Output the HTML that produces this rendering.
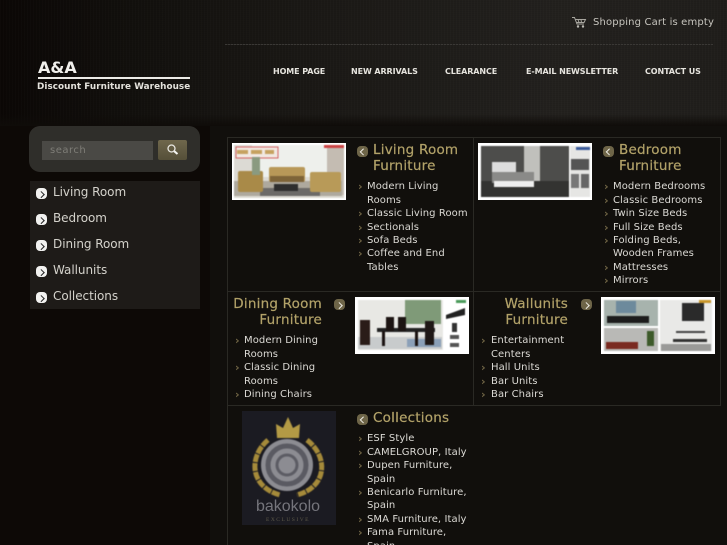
<!DOCTYPE html>
<html><head><meta charset="utf-8"><style>
*{margin:0;padding:0;box-sizing:border-box}
html,body{width:727px;height:545px;overflow:hidden;background:#0d0906}
body{position:relative;font-family:"DejaVu Sans","Liberation Sans",sans-serif;color:#d8d6d0}
.a{position:absolute;white-space:nowrap}
#top{left:0;top:0;width:727px;height:126px;background:linear-gradient(90deg,#0b0705 0,#12100d 130px,#1a1815 300px,#23211e 560px,#201e1b 727px)}
#tex{left:0;top:0;width:727px;height:126px;background:repeating-linear-gradient(90deg,rgba(255,255,255,.012) 0 1px,transparent 1px 3px),repeating-linear-gradient(0deg,rgba(0,0,0,.05) 0 1px,transparent 1px 2px)}
#fade{left:0;top:114px;width:727px;height:12px;background:linear-gradient(180deg,transparent,#0f0c09)}
#right{left:210px;top:126px;width:517px;height:419px;background:#110f0c}
.nav{top:66px;font:bold 8px/11px "DejaVu Sans",sans-serif;color:#e6e4de;letter-spacing:-.1px}
.side{left:53px;font-size:12px;line-height:18px;color:#d4d2cb;letter-spacing:-.05px}
.bul{left:36px;width:11px;height:11px;border-radius:4px;background:#f2f2f0}
.bul:after,.arr:after{content:"";position:absolute;left:2.5px;top:3.5px;width:3.5px;height:3.5px;border-top:1.5px solid #222;border-right:1.5px solid #222;transform:rotate(45deg)}
.h{font-size:13.5px;line-height:16px;color:#b2a269;letter-spacing:.22px;-webkit-text-stroke:.2px #b2a269}
.r{text-align:right}
.l{font-size:10px;line-height:13.4px;color:#dcdad5;letter-spacing:.08px}
.m{font-size:11px;font-weight:bold;line-height:13.4px;color:#716646}
.arr{width:11px;height:11px;border-radius:4px;background:#6e6548}
.arr:after{border-color:#f0eee8}
.arr.b:after{transform:rotate(-135deg);left:4.2px}
.line{background:#2a2924}
.img{background:#fff;overflow:hidden}
.img g,.bk{filter:blur(.6px)}
</style></head><body>
<div class="a" id="top"></div><div class="a" id="tex"></div><div class="a" id="fade"></div>
<div class="a" id="right"></div>

<svg class="a" style="left:571px;top:16px" width="16" height="13" viewBox="0 0 16 13" fill="none" stroke="#a8a69f" stroke-width="1"><path d="M1 1.500h2.500l2.500 6.500h7M4 3.500h10.500l-1.500 3H5.500M7 3.500l1 3M10 3.500l.5 3"/><circle cx="7" cy="10.500" r="1.200" fill="#bdbbb4" stroke="none"/><circle cx="12" cy="10.500" r="1.200" fill="#bdbbb4" stroke="none"/></svg>
<div class="a" style="left:593px;top:16px;font-size:10px;line-height:13px;color:#c6c4bd;letter-spacing:.15px">Shopping Cart is empty</div>
<div class="a" style="left:225px;top:44px;width:488px;height:1px;background:repeating-linear-gradient(90deg,#3a3835 0 2px,#262421 2px 3px)"></div>

<div class="a" style="left:38px;top:58px;font:bold 16px/19px 'DejaVu Sans',sans-serif;color:#f1f0ec">A&amp;A</div>
<div class="a" style="left:38px;top:77px;width:152px;height:2px;background:#ecebe7"></div>
<div class="a" style="left:37px;top:82px;font:bold 8.8px/11px 'DejaVu Sans',sans-serif;color:#e4e2dc;letter-spacing:.07px">Discount Furniture Warehouse</div>

<div class="a nav" style="left:273px">HOME PAGE</div>
<div class="a nav" style="left:351px">NEW ARRIVALS</div>
<div class="a nav" style="left:445px">CLEARANCE</div>
<div class="a nav" style="left:526px">E-MAIL NEWSLETTER</div>
<div class="a nav" style="left:645px">CONTACT US</div>

<div class="a" style="left:29px;top:126px;width:171px;height:46px;border-radius:11px;background:#2f2e2a"></div>
<div class="a" style="left:42px;top:141px;width:111px;height:19px;background:#4a4945;font-size:10px;line-height:19px;color:#7e7d77;padding-left:8px;letter-spacing:.5px">search</div>
<div class="a" style="left:158px;top:140px;width:29px;height:20px;border-radius:2px;background:linear-gradient(180deg,#6f674c,#554f39)"></div>
<svg class="a" style="left:166px;top:143px" width="14" height="14" viewBox="0 0 14 14" fill="none"><circle cx="5.500" cy="5.500" r="3.500" stroke="#e8e6e0" stroke-width="1.300"/><path d="M8.200 8.200l3.300 2.800" stroke="#f4f4f0" stroke-width="2"/></svg>

<div class="a" style="left:30px;top:181px;width:170px;height:128px;background:#1e1b18"></div>
<div class="a bul" style="top:188px"></div><div class="a side" style="top:183px">Living Room</div>
<div class="a bul" style="top:214px"></div><div class="a side" style="top:209px">Bedroom</div>
<div class="a bul" style="top:240px"></div><div class="a side" style="top:235px">Dining Room</div>
<div class="a bul" style="top:266px"></div><div class="a side" style="top:261px">Wallunits</div>
<div class="a bul" style="top:292px"></div><div class="a side" style="top:287px">Collections</div>

<!-- grid -->
<div class="a line" style="left:227px;top:137px;width:494px;height:1px"></div>
<div class="a line" style="left:227px;top:291px;width:494px;height:1px"></div>
<div class="a line" style="left:227px;top:405px;width:494px;height:1px"></div>
<div class="a line" style="left:227px;top:137px;width:1px;height:408px"></div>
<div class="a line" style="left:473px;top:137px;width:1px;height:268px"></div>
<div class="a line" style="left:720px;top:137px;width:1px;height:269px"></div>

<!-- living -->
<svg class="a img" style="left:232px;top:143px" width="114" height="57" viewBox="0 0 114 57"><g><rect x="2" y="2" width="110" height="53" fill="#dcdad4"/><rect x="20" y="2" width="75" height="32" fill="#eef0ec"/><rect x="95" y="2" width="17" height="50" fill="#c4bcb2"/><rect x="4" y="4" width="42" height="11" fill="#f1e8e2" stroke="#c44" stroke-width=".8"/><rect x="5" y="7" width="11" height="4" fill="#c6a260"/><rect x="19" y="7" width="11" height="4" fill="#c6a260"/><rect x="33" y="7" width="9" height="4" fill="#c6a260"/><rect x="2" y="38" width="108" height="15" fill="#aea99e"/><rect x="28" y="45" width="60" height="8" fill="#6c6a68"/><rect x="37" y="24" width="36" height="15" rx="2" fill="#b89858"/><rect x="38" y="33" width="34" height="6" fill="#7e6438"/><rect x="6" y="28" width="25" height="21" rx="2" fill="#a98a48"/><rect x="78" y="29" width="31" height="20" rx="2" fill="#b89a58"/><rect x="42" y="41" width="24" height="7" fill="#2e2e2e"/><rect x="92" y="2" width="20" height="3" fill="#c44"/><rect x="20" y="14" width="8" height="18" fill="#8a9a80"/></g></svg>
<div class="a arr b" style="left:357px;top:146px"></div>
<div class="a h" style="left:373px;top:142px">Living Room<br>Furniture</div>
<div class="a m" style="left:358px;top:180.400px">›<br><br>›<br>›<br>›<br>›</div>
<div class="a l" style="left:367px;top:180.400px">Modern Living<br>Rooms<br>Classic Living Room<br>Sectionals<br>Sofa Beds<br>Coffee and End<br>Tables</div>

<!-- bedroom -->
<svg class="a img" style="left:478px;top:143px" width="114" height="57" viewBox="0 0 114 57"><g><rect x="3" y="3" width="88" height="51" fill="#4d4d4b"/><rect x="46" y="3" width="16" height="35" fill="#c0c0bc"/><rect x="3" y="38" width="88" height="16" fill="#333331"/><rect x="14" y="19" width="24" height="11" fill="#ddd"/><rect x="14" y="29" width="42" height="11" fill="#8a8a88"/><rect x="16" y="38" width="40" height="6" fill="#eee"/><rect x="92" y="3" width="20" height="51" fill="#e6e6e4"/><rect x="93" y="16" width="18" height="11" fill="#555"/><rect x="93" y="31" width="8" height="14" fill="#777"/><rect x="103" y="31" width="8" height="14" fill="#666"/><rect x="98" y="4" width="14" height="3" fill="#3a5a9a"/></g></svg>
<div class="a arr b" style="left:603px;top:146px"></div>
<div class="a h" style="left:619px;top:142px">Bedroom<br>Furniture</div>
<div class="a m" style="left:604px;top:180.400px">›<br>›<br>›<br>›<br>›<br><br>›<br>›</div>
<div class="a l" style="left:613px;top:180.400px">Modern Bedrooms<br>Classic Bedrooms<br>Twin Size Beds<br>Full Size Beds<br>Folding Beds,<br>Wooden Frames<br>Mattresses<br>Mirrors</div>

<!-- dining -->
<div class="a h r" style="left:228px;top:296px;width:94px">Dining Room<br>Furniture</div>
<div class="a arr" style="left:334px;top:299px"></div>
<svg class="a img" style="left:355px;top:297px" width="114" height="57" viewBox="0 0 114 57"><g><rect x="3" y="3" width="85" height="50" fill="#e8e8e4"/><rect x="50" y="3" width="36" height="24" fill="#7f9a78"/><rect x="3" y="40" width="84" height="12" fill="#c8cbcc"/><rect x="52" y="42" width="34" height="8" fill="#8ba0b8"/><rect x="22" y="31" width="58" height="4" fill="#222"/><rect x="27" y="34" width="3" height="15" fill="#1a1210"/><rect x="60" y="34" width="3" height="15" fill="#1a1210"/><rect x="5" y="23" width="10" height="25" fill="#2a1c18"/><rect x="31" y="20" width="8" height="14" fill="#1c1412"/><rect x="43" y="20" width="8" height="14" fill="#1c1412"/><rect x="70" y="24" width="9" height="24" fill="#1f1816"/><path d="M91 18l19-7v7l-19 4z" fill="#222"/><rect x="97" y="26" width="5" height="9" fill="#333"/><rect x="95" y="38" width="9" height="4" fill="#555"/><rect x="95" y="46" width="9" height="4" fill="#555"/><rect x="101" y="3" width="10" height="3" fill="#4a9a5a"/></g></svg>
<div class="a m" style="left:235px;top:334.400px">›<br><br>›<br><br>›</div>
<div class="a l" style="left:244px;top:334.400px">Modern Dining<br>Rooms<br>Classic Dining<br>Rooms<br>Dining Chairs</div>

<!-- wallunits -->
<div class="a h r" style="left:475px;top:296px;width:93px">Wallunits<br>Furniture</div>
<div class="a arr" style="left:581px;top:299px"></div>
<svg class="a img" style="left:601px;top:297px" width="114" height="57" viewBox="0 0 114 57"><g><rect x="3" y="3" width="54" height="26" fill="#a7b3ad"/><rect x="15" y="4" width="20" height="12" fill="#6d8a9c"/><rect x="6" y="19" width="42" height="7" fill="#1c1c1c"/><rect x="3" y="31" width="54" height="23" fill="#b9b9b6"/><rect x="5" y="45" width="32" height="7" fill="#7a2a20"/><rect x="46" y="34" width="7" height="15" fill="#3d5a2a"/><rect x="59" y="3" width="52" height="51" fill="#e9e9e7"/><rect x="81" y="6" width="22" height="18" fill="#2a2a2a"/><rect x="75" y="34" width="29" height="2" fill="#444"/><rect x="72" y="42" width="34" height="3" fill="#333"/><rect x="60" y="47" width="50" height="7" fill="#9a9a98"/><rect x="98" y="3" width="12" height="3" fill="#c8962a"/></g></svg>
<div class="a m" style="left:481px;top:334.400px">›<br><br>›<br>›<br>›</div>
<div class="a l" style="left:491px;top:334.400px">Entertainment<br>Centers<br>Hall Units<br>Bar Units<br>Bar Chairs</div>

<!-- collections -->
<svg class="a" style="left:242px;top:411px" width="94" height="114" viewBox="0 0 94 114"><rect width="94" height="114" fill="#1b1b22"/><g class="bk"><path d="M26 29C6 46 8 76 38 84" fill="none" stroke="#a58a3a" stroke-width="5" stroke-dasharray="8 1"/><path d="M65 29C87 46 85 76 55 84" fill="none" stroke="#a58a3a" stroke-width="5" stroke-dasharray="8 1"/><circle cx="45" cy="54" r="26" fill="#8c8c92"/><circle cx="45" cy="54" r="19" fill="none" stroke="#5a5a62" stroke-width="5"/><circle cx="45" cy="54" r="10" fill="none" stroke="#5c5c64" stroke-width="3"/><path d="M35 27l-1-14 7 4 5-11 5 11 7-4-1 14z" fill="#b39a45"/></g><text x="46" y="100" text-anchor="middle" font-family="Liberation Sans,sans-serif" font-size="16" fill="#75757c">bakokolo</text><text x="46" y="110" text-anchor="middle" font-family="Liberation Serif,serif" font-size="5.500" letter-spacing="1.500" fill="#5e5a4a">EXCLUSIVE</text></svg>
<div class="a arr b" style="left:357px;top:414px"></div>
<div class="a h" style="left:373px;top:410px">Collections</div>
<div class="a m" style="left:358px;top:432.400px">›<br>›<br>›<br><br>›<br><br>›<br>›</div>
<div class="a l" style="left:367px;top:432.400px">ESF Style<br>CAMELGROUP, Italy<br>Dupen Furniture,<br>Spain<br>Benicarlo Furniture,<br>Spain<br>SMA Furniture, Italy<br>Fama Furniture,<br>Spain</div>
</body></html>
